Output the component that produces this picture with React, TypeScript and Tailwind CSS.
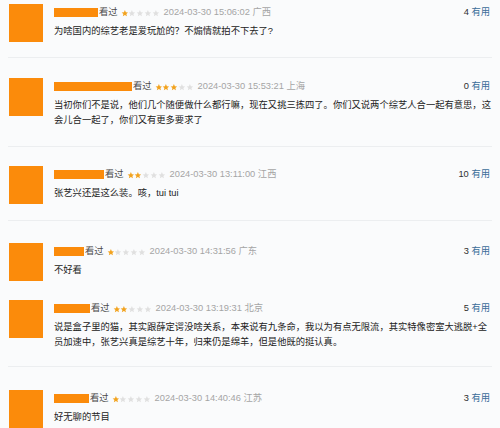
const comments = [
  {
    nameW: 'w-[44px]',
    stars: 1,
    time: '2024-03-30 15:06:02',
    place: '广西',
    useful: 4,
    text: '为啥国内的综艺老是爱玩尬的？不煽情就拍不下去了?',
    wrap: 'pt-[4px] pb-[15px] border-b',
  },
  {
    nameW: 'w-[78px]',
    stars: 3,
    time: '2024-03-30 15:53:21',
    place: '上海',
    useful: 0,
    text: '当初你们不是说，他们几个随便做什么都行嘛，现在又挑三拣四了。你们又说两个综艺人合一起有意思，这会儿合一起了，你们又有更多要求了',
    wrap: 'pt-[20px] pb-[18px] border-b',
  },
  {
    nameW: 'w-[50px]',
    stars: 2,
    time: '2024-03-30 13:11:00',
    place: '江西',
    useful: 10,
    text: '张艺兴还是这么装。咳，tui tui',
    wrap: 'pt-[19px] pb-[16px] border-b',
  },
  {
    nameW: 'w-[30px]',
    stars: 1,
    time: '2024-03-30 14:31:56',
    place: '广东',
    useful: 3,
    text: '不好看',
    wrap: 'pt-[22px] pb-[19px]',
  },
  {
    nameW: 'w-[36px]',
    stars: 2,
    time: '2024-03-30 13:19:31',
    place: '北京',
    useful: 5,
    text: '说是盒子里的猫，其实跟薛定谔没啥关系，本来说有九条命，我以为有点无限流，其实特像密室大逃脱+全员加速中，张艺兴真是综艺十年，归来仍是绵羊，但是他既的挺认真。',
    wrap: 'pt-0 pb-[16px] border-b',
  },
  {
    nameW: 'w-[35px]',
    stars: 1,
    time: '2024-03-30 14:40:46',
    place: '江苏',
    useful: 3,
    text: '好无聊的节目',
    wrap: 'pt-[23px] pb-[8px]',
  },
];

function Stars({ n }: { n: number }) {
  return (
    <span className="flex items-center">
      {[0, 1, 2, 3, 4].map((i) => (
        <svg key={i} viewBox="0 0 24 24" className="h-[8.5px] w-[7.8px]">
          <path
            d="M12 2l2.9 6.9 7.1.6-5.4 4.7 1.7 7.1L12 17.5 5.7 21.3l1.7-7.1L2 9.5l7.1-.6z"
            fill={i < n ? '#f2a31f' : '#e0e0e0'}
          />
        </svg>
      ))}
    </span>
  );
}

export default function App() {
  return (
    <div
      className="h-[428px] w-[500px] overflow-hidden bg-[#fafbfc] text-[9.3px]"
      style={{ fontFamily: '"Liberation Sans", "Noto Sans CJK SC", sans-serif' }}
    >
      {comments.map((c, idx) => (
        <div key={idx} className={`mx-[8px] flex border-[#eceef0] ${c.wrap}`}>
          <div className="ml-[1px] h-[38px] w-[34px] shrink-0 bg-[#fb8b0b]" />
          <div className="ml-[11px] min-w-0 flex-1 pt-[2px]">
            <div className="flex h-[14px] items-center pr-[2px]">
              <span className={`-mt-[1px] h-[9px] ${c.nameW} bg-[#fb8b0b]`} />
              <span className="ml-[1px] text-[#4a4a4a]">看过</span>
              <span className="ml-[3px]">
                <Stars n={c.stars} />
              </span>
              <span className="ml-[4px] text-[#a5a5a5]">
                {c.time} {c.place}
              </span>
              <span className="ml-auto text-[#2f2f2f]">
                {c.useful} <span className="text-[#3a6d99]">有用</span>
              </span>
            </div>
            <p className="mt-[4px] leading-[15px] text-[#222]">{c.text}</p>
          </div>
        </div>
      ))}
    </div>
  );
}
